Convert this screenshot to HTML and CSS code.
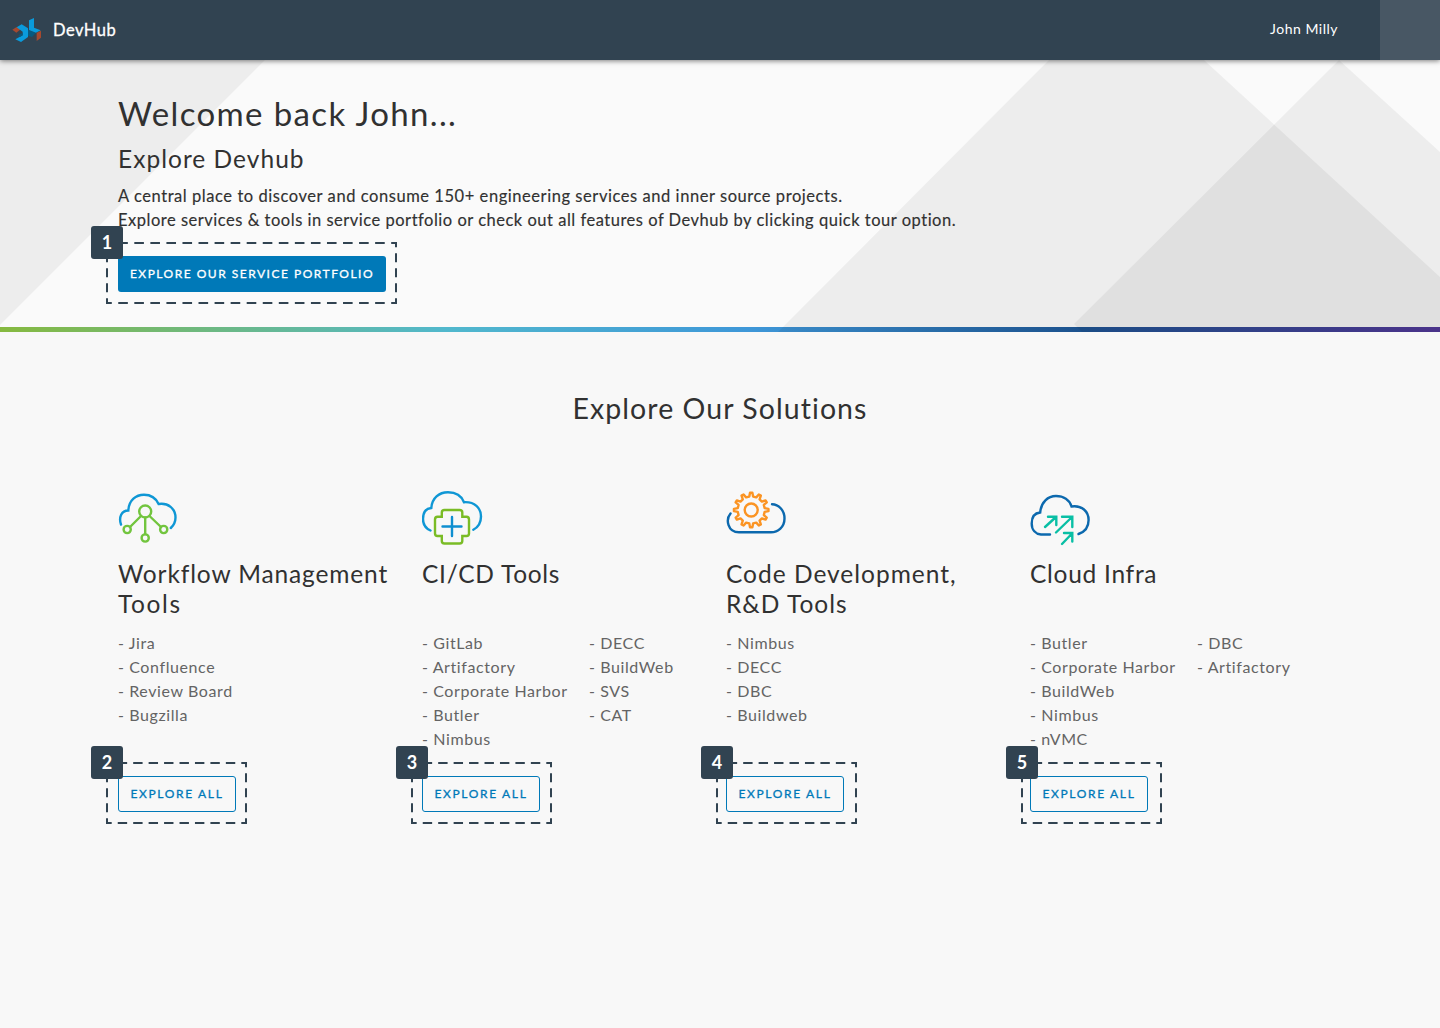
FILE: index.html
```html
<!DOCTYPE html>
<html lang="en">
<head>
<meta charset="utf-8">
<title>DevHub</title>
<link rel="stylesheet" href="styles.css">
</head>
<body>
<header class="topbar">
  <div class="brand">
    <svg class="logo" width="30" height="24" viewBox="36 54 90 72">
      <path fill="#a5492f" d="M37 89 50 81 64 86 49 98z"/>
      <path fill="#0a9bdc" d="M50 82 65 73 84 85V111L63 126 46 118 68 106V95z"/>
      <path fill="#075a80" d="M84 90 108 98 96 111 84 107zM55 106 68 98V106L60 111z"/>
      <path fill="#0a9bdc" d="M87 61 102 54V83L122 91 108 98 87 90z"/>
      <path fill="#a5492f" d="M110 98 123 92V113L110 123z"/>
    </svg>
    <span class="brand-name">DevHub</span>
  </div>
  <div class="account"><span class="user">John Milly</span><span class="account-tile"></span></div>
</header>

<section class="hero">
  <svg class="hero-art" width="1440" height="272" viewBox="0 0 1440 272">
    <path d="M0 0H265L0 265z"/>
    <path d="M1049 0H1204L1440 217V272H778z"/>
    <path d="M1339 0 1440 92V272H1082L1074 264z"/>
  </svg>
  <div class="hero-text">
    <h1 class="welcome">Welcome back John...</h1>
    <h2 class="hero-sub">Explore Devhub</h2>
    <p class="hero-copy">A central place to discover and consume 150+ engineering services and inner source projects.<br><span class="copy-second">Explore services &amp; tools in service portfolio or check out all features of Devhub by clicking quick tour option.</span></p>
    <div class="action">
      <a class="btn btn-primary">EXPLORE OUR SERVICE PORTFOLIO</a>
      <svg class="frame" width="291" height="62"><g stroke-dashoffset="3.800"><path stroke-dasharray="9.600 6.455" d="M0 1H291M0 61H291"/><path stroke-dasharray="9 6" d="M1 0V62M290 0V62"/></g></svg>
      <span class="badge">1</span>
    </div>
  </div>
</section>

<main class="solutions">
  <h2 class="section-title">Explore Our Solutions</h2>
  <div class="cards">
    <article class="card">
      <svg class="icon" width="62" height="64" viewBox="118 484 62 64">
        <path stroke="#0f97d5" d="M121 524.500C118.500 517 121.500 510.500 128.300 510.500 129 500 136 494.800 144 494.800 151 494.800 156 498.500 158.600 504 168 502.500 175.500 508.500 175.500 517.500 175.500 522 174 525 170.800 528"/>
        <g stroke="#72c53e"><circle cx="145.200" cy="511.500" r="6"/><circle cx="127.200" cy="529.500" r="3.600"/><circle cx="145.200" cy="538" r="3.600"/><circle cx="163.700" cy="529.500" r="3.600"/><path d="M141 516 130 527M145.200 517.500V534M149.500 516 161 527"/></g>
      </svg>
      <h3 class="card-title">Workflow Management<br><span class="wide">Tools</span></h3>
      <div class="lists"><ul><li>- Jira</li><li>- Confluence</li><li>- Review Board</li><li>- Bugzilla</li></ul></div>
      <div class="action">
        <a class="btn btn-outline">EXPLORE ALL</a>
        <svg class="frame" width="141" height="62"><g stroke-dashoffset="3.700"><path stroke-dasharray="9.400 6.044" d="M0 1H141M0 61H141"/><path stroke-dasharray="9 6" d="M1 0V62M140 0V62"/></g></svg>
        <span class="badge">2</span>
      </div>
    </article>
    <article class="card">
      <svg class="icon" width="62" height="64" viewBox="422 484 62 64">
        <path stroke="#0f97d5" d="M430.500 530.500C425 528 423 524 423 519 423 512.500 426 508.500 431.300 508 432 498 439 492.300 448 492.300 455.500 492.300 461.500 496 464 502.200 474.500 501.500 481 508 481 516.500 481 523 478.500 527 473.300 529.800"/>
        <path stroke="#7abc26" d="M444.500 510H459.500Q462.300 510 462.300 512.500V516.800H466.500Q469 516.800 469 519.500V533.500Q469 536 466.500 536H462.300V541Q462.300 543.500 459.500 543.500H444.500Q441.800 543.500 441.800 541V536H437.500Q435 536 435 533.500V519.500Q435 516.800 437.500 516.800H441.800V512.500Q441.800 510 444.500 510z"/>
        <path stroke="#0f8fd0" d="M452 517V536M442.500 526.500H461.500"/>
      </svg>
      <h3 class="card-title tight">CI/CD Tools</h3>
      <div class="lists"><ul><li>- GitLab</li><li>- Artifactory</li><li>- Corporate Harbor</li><li>- Butler</li><li>- Nimbus</li></ul><ul><li>- DECC</li><li>- BuildWeb</li><li>- SVS</li><li>- CAT</li></ul></div>
      <div class="action shift-1">
        <a class="btn btn-outline">EXPLORE ALL</a>
        <svg class="frame" width="141" height="62"><g stroke-dashoffset="3.700"><path stroke-dasharray="9.400 6.044" d="M0 1H141M0 61H141"/><path stroke-dasharray="9 6" d="M1 0V62M140 0V62"/></g></svg>
        <span class="badge">3</span>
      </div>
    </article>
    <article class="card">
      <svg class="icon" width="62" height="64" viewBox="726 484 62 64">
        <path stroke="#0c69ae" d="M730.500 513.500C725.500 519.500 727.500 532.300 739 532.300H771C778 532.300 784.500 527 784.500 518.500 784.500 510 778.500 504.500 772 504.300"/>
        <g stroke="#fb9423" stroke-linejoin="round"><circle cx="751.200" cy="510" r="6.500"/><path id="gear" d=""/></g>
      </svg>
      <h3 class="card-title loose">Code Development,<br>R&amp;D Tools</h3>
      <div class="lists"><ul><li>- Nimbus</li><li>- DECC</li><li>- DBC</li><li>- Buildweb</li></ul></div>
      <div class="action shift-2">
        <a class="btn btn-outline">EXPLORE ALL</a>
        <svg class="frame" width="141" height="62"><g stroke-dashoffset="3.700"><path stroke-dasharray="9.400 6.044" d="M0 1H141M0 61H141"/><path stroke-dasharray="9 6" d="M1 0V62M140 0V62"/></g></svg>
        <span class="badge">4</span>
      </div>
    </article>
    <article class="card">
      <svg class="icon" width="62" height="64" viewBox="1030 484 62 64">
        <path stroke="#0c69ae" d="M1050 534.500H1041C1035.500 534 1031.700 530 1031.700 523.500 1031.700 517 1035 513 1040.200 512.500 1041 502 1048 496 1056 496 1063.500 496 1069.500 500 1071.500 506.500 1082 505 1088.600 511.500 1088.600 520 1088.600 527.500 1084.500 532 1078.500 534"/>
        <path stroke="#09bfa5" d="M1045 527 1056 517M1048 516.700H1056.300V525M1056 532.500 1072 517M1062 516.700H1072.300V527M1062 544 1072 533.500M1064 533H1072.300V541.500"/>
      </svg>
      <h3 class="card-title tight">Cloud Infra</h3>
      <div class="lists"><ul><li>- Butler</li><li>- Corporate Harbor</li><li>- BuildWeb</li><li>- Nimbus</li><li>- nVMC</li></ul><ul><li>- DBC</li><li>- Artifactory</li></ul></div>
      <div class="action shift-3">
        <a class="btn btn-outline">EXPLORE ALL</a>
        <svg class="frame" width="141" height="62"><g stroke-dashoffset="3.700"><path stroke-dasharray="9.400 6.044" d="M0 1H141M0 61H141"/><path stroke-dasharray="9 6" d="M1 0V62M140 0V62"/></g></svg>
        <span class="badge">5</span>
      </div>
    </article>
  </div>
</main>
<script src="gear.js"></script>
</body>
</html>
```
FILE: gear.js
```js
// Builds the twelve-tooth outline of the gear icon.
const teeth = 12, cx = 751.2, cy = 510;
const points = [];
for (let i = 0; i < teeth; i++) {
  for (const [offset, radius] of [[-0.27, 13.6], [-0.13, 17.3], [0.13, 17.3], [0.27, 13.6]]) {
    const angle = (i + offset) / teeth * 2 * Math.PI;
    points.push((cx + radius * Math.sin(angle)).toFixed(2) + ' ' + (cy - radius * Math.cos(angle)).toFixed(2));
  }
}
document.getElementById('gear').setAttribute('d', 'M' + points.join('L') + 'z');
```
FILE: styles.css
```css
* { box-sizing: border-box; }
body { margin: 0; min-height: 100vh; background: #f8f8f8; color: #313131; font-family: Lato, "Open Sans", sans-serif; }
h1, h2, h3, p, ul { margin: 0; padding: 0; font-weight: 400; }
ul { list-style: none; }

.topbar { position: relative; z-index: 1; display: flex; justify-content: space-between; height: 60px; background: #314351; color: #fff; box-shadow: 0 1px 5px rgba(0, 0, 0, .5); }
.brand { display: flex; align-items: center; gap: 11px; padding-left: 12px; }
.brand-name { padding-bottom: 1px; font-size: 16.5px; letter-spacing: .5px; -webkit-text-stroke: .3px #fff; }
.account { display: flex; align-items: center; gap: 42px; }
.user { padding-bottom: 3px; font-size: 14px; letter-spacing: .5px; }
.account-tile { width: 60px; height: 60px; background: #485764; }

.hero { display: grid; height: 272px; background: #fafafa; border-bottom: 5px solid; border-image: linear-gradient(90deg, #86b93f, #51b8cd 31%, #3e97d8 52%, #1e5796 75%, #54399a) 1; }
.hero > * { grid-area: 1 / 1; }
.hero-art { display: block; fill: rgba(0, 0, 0, .052); }
.hero-text { padding: 32px 0 0 118px; }
.welcome { font-size: 33px; line-height: 42px; letter-spacing: 1.37px; white-space: nowrap; }
.hero-sub { margin-top: 10px; font-size: 24.5px; line-height: 30px; letter-spacing: 1.03px; }
.hero-copy { margin: 10px 0 24px; font-size: 16.5px; line-height: 24px; letter-spacing: .557px; white-space: nowrap; -webkit-text-stroke: .15px; }
.copy-second { letter-spacing: .508px; }

.action { position: relative; width: max-content; --shift: 0px; }
.shift-1 { --shift: 1px; }
.shift-2 { --shift: 2px; }
.shift-3 { --shift: 3px; }
.btn { display: flex; align-items: center; justify-content: center; height: 36px; padding: 0 0 2px; border-radius: 3px; font-size: 12px; letter-spacing: 1.5px; white-space: nowrap; -webkit-text-stroke: .3px; }
.btn-primary { width: 268px; background: #0079b8; color: #fff; }
.btn-outline { width: 118px; border: 1px solid #0079b8; color: #0079b8; letter-spacing: 1.65px; }
.frame { position: absolute; left: calc(-12px + var(--shift)); top: -14px; fill: none; stroke: #314351; stroke-width: 2; }
.badge { position: absolute; left: calc(-27px + var(--shift)); top: -30px; width: 32px; height: 33px; border-radius: 3px; background: #314351; color: #fff; font-size: 18px; font-weight: 700; line-height: 32px; text-align: center; }

.solutions { padding-bottom: 216px; }
.section-title { padding-top: 58px; font-size: 28.5px; line-height: 36px; text-align: center; letter-spacing: 1.05px; }
.cards { display: grid; grid-template-columns: repeat(4, 304px); padding: 58px 0 0 118px; }
.icon { display: block; fill: none; stroke-width: 2.4; stroke-linecap: round; }
.card-title { height: 60px; margin-top: 11px; font-size: 24.5px; line-height: 30px; letter-spacing: .87px; white-space: nowrap; }
.wide { letter-spacing: 1.6px; }
.tight { letter-spacing: .72px; }
.loose { letter-spacing: 1px; }
.lists { display: grid; grid-template-columns: 167px 137px; height: 120px; margin: 12px 0 25px; color: #646464; font-size: 16px; line-height: 24px; letter-spacing: .6px; white-space: nowrap; }
```
